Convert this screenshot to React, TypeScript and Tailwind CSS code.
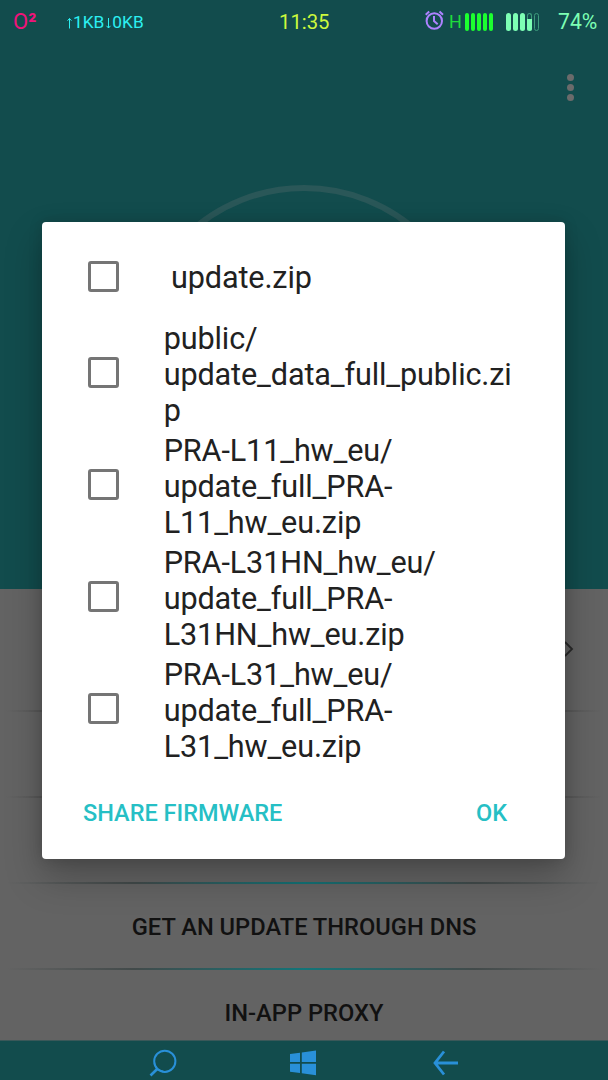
const files = [
  ["public/", "update_data_full_public.zi", "p"],
  ["PRA-L11_hw_eu/", "update_full_PRA-", "L11_hw_eu.zip"],
  ["PRA-L31HN_hw_eu/", "update_full_PRA-", "L31HN_hw_eu.zip"],
  ["PRA-L31_hw_eu/", "update_full_PRA-", "L31_hw_eu.zip"],
];

function AlarmIcon() {
  return (
    <svg width="20" height="20" viewBox="0 0 20 20" fill="none" stroke="#ad82ff" strokeWidth="2">
      <circle cx="9.3" cy="11" r="7.7" />
      <path d="M9 6v5l3.7 3.2" />
      <path d="M.7 4.7 4.2 1.5M18 4.7 14.5 1.5" />
    </svg>
  );
}

function StatusBar() {
  return (
    <div className="flex h-11 items-center">
      <div className="w-[66px] pl-[13px] text-[22px] leading-[44px] text-[#f0127a]">
        O<span className="font-bold">²</span>
      </div>
      <div className="flex w-[213px] items-center text-[17.3px] leading-[44px] text-[#2cf0f2]">
        <svg width="7" height="14" viewBox="0 0 7 14" fill="none" stroke="#2cf0f2" className="mt-[2px]">
          <path d="M3.5 12.5v-10M1.5 4.7l2-2.2 2 2.2" />
        </svg>
        <div>1KB</div>
        <svg width="8" height="14" viewBox="0 0 8 14" fill="none" stroke="#2cf0f2" className="mt-[2px]">
          <path d="M4.5 2v10M2.5 9.8l2 2.2 2-2.2" />
        </svg>
        <div>0KB</div>
      </div>
      <div className="w-[146px] text-[20.3px] leading-[42px] text-[#cdf93c]">11:35</div>
      <div className="w-6 pb-1">
        <AlarmIcon />
      </div>
      <div className="w-4 text-[18px] leading-[44px] text-[#1edc3c]">H</div>
      <div className="flex w-[41px] gap-[2px]">
        <div className="h-[18px] w-1 rounded-full bg-[#1cff2f]" />
        <div className="h-[18px] w-1 rounded-full bg-[#1cff2f]" />
        <div className="h-[18px] w-1 rounded-full bg-[#1cff2f]" />
        <div className="h-[18px] w-1 rounded-full bg-[#1cff2f]" />
        <div className="h-[18px] w-1 rounded-full bg-[#1cff2f]" />
      </div>
      <div className="flex w-[52px] gap-[2px]">
        <div className="h-[18px] w-[5px] rounded-full bg-[#7dffb4]" />
        <div className="h-[18px] w-[5px] rounded-full bg-[#7dffb4]" />
        <div className="h-[18px] w-[5px] rounded-full bg-[#7dffb4]" />
        <div className="flex h-[18px] w-[5px] flex-col justify-end rounded-full border border-b-0 border-[#3d9b7c]">
          <div className="-mx-px h-3 rounded-b-full bg-[#7dffb4]" />
        </div>
        <div className="h-[18px] w-[5px] rounded-full border border-[#3d9b7c]" />
      </div>
      <div className="text-[21.2px] leading-[44px] text-[#7dffb4]">74%</div>
    </div>
  );
}

function Header() {
  return (
    <div className="h-[589px] bg-[#124c4d]">
      <StatusBar />
      <div className="flex h-[88px] justify-end pr-[34px] pt-[30px]">
        <div className="flex flex-col gap-[3px]">
          <div className="size-[7px] rounded-full bg-[#6b6b6b]" />
          <div className="size-[7px] rounded-full bg-[#6b6b6b]" />
          <div className="size-[7px] rounded-full bg-[#6b6b6b]" />
        </div>
      </div>
      <div className="flex justify-center pt-[53px]">
        <div className="size-[346px] rounded-full border-[6px] border-[#2a5758]" />
      </div>
    </div>
  );
}

function Divider({ teal = false }: { teal?: boolean }) {
  return (
    <div
      className={
        teal
          ? "h-[2px] bg-[linear-gradient(to_right,#636363_1%,#424a4a_22%,#127478_50%,#424a4a_78%,#636363_99%)]"
          : "h-[2px] bg-[linear-gradient(to_right,#636363_1%,#484848_14%,#484848_86%,#636363_99%)]"
      }
    />
  );
}

function Menu() {
  return (
    <div className="h-[451px] bg-[#636363] text-[23.7px] font-medium text-[#111]">
      <div className="flex h-[121px] items-center justify-end pr-[34px]">
        <svg width="10" height="18" viewBox="0 0 10 18" fill="none" stroke="#292929" strokeWidth="1.8">
          <path d="m1 1 7 7-7 7" />
        </svg>
      </div>
      <Divider />
      <div className="h-[84px]" />
      <Divider />
      <div className="h-[84px]" />
      <Divider teal />
      <div className="flex h-[84px] items-center justify-center pt-[3px]">GET AN UPDATE THROUGH DNS</div>
      <Divider teal />
      <div className="flex h-[84px] items-center justify-center pt-[3px]">IN-APP PROXY</div>
    </div>
  );
}

function NavBar() {
  return (
    <div className="flex h-10 items-center border-t border-[#3a5859] bg-[#124c4d] pl-[149px] pt-[5px]">
      <div className="w-[141px]">
        <svg width="28" height="28" viewBox="0 0 28 28" fill="none" stroke="#2990d8" strokeWidth="2">
          <circle cx="15.8" cy="12.3" r="10.6" />
          <path d="M5.4 14.5 8 20.5l6 2" strokeWidth="1.4" />
          <path d="M8.7 19.5 1.5 26.5" strokeWidth="2.6" />
        </svg>
      </div>
      <div className="w-[141px]">
        <svg width="26" height="26" viewBox="0 0 26 26" fill="#2990d8">
          <path d="M0 4 10 2.7V12H0zM11.8 2.4 26 .4V12H11.8zM0 13.8h10v9.3L0 21.8zM11.8 13.8H26v11.4l-14.2-2z" />
        </svg>
      </div>
      <svg width="28" height="26" viewBox="0 0 28 26" fill="none" stroke="#2990d8" strokeWidth="2.8">
        <path d="M27 13H4M13 1.5 4 13l9 11.5" />
      </svg>
    </div>
  );
}

function Checkbox() {
  return <div className="size-[31px] shrink-0 rounded-[3px] border-3 border-[#757575]" />;
}

function FirmwareDialog() {
  return (
    <div className="absolute inset-x-0 top-[222px] flex justify-center pr-px">
      <div className="h-[637px] w-[523px] rounded-[4px] bg-white pt-[14px] text-[30.6px] leading-[35.7px] tracking-[-0.13px] text-[#212121] shadow-[0_18px_36px_rgba(0,0,0,0.25),0_0_14px_rgba(0,0,0,0.15)]">
        <div className="flex h-[80px] items-center pl-[45.5px]">
          <Checkbox />
          <div className="pl-[52.5px] pt-[4px]">update.zip</div>
        </div>
        {files.map((lines) => (
          <div key={lines[0]} className="flex h-[112px] items-center pl-[45.5px]">
            <Checkbox />
            <div className="whitespace-nowrap pl-[45.2px] pt-[6px]">
              {lines.map((line) => (
                <div key={line}>{line}</div>
              ))}
            </div>
          </div>
        ))}
        <div className="flex justify-between pl-[41px] pr-[58px] pt-[32px] text-[23.5px] font-medium tracking-normal text-[#26bfc5]">
          <button type="button">SHARE FIRMWARE</button>
          <button type="button">OK</button>
        </div>
      </div>
    </div>
  );
}

export default function App() {
  return (
    <div className="relative h-[1080px] w-[608px] overflow-hidden font-[Roboto,sans-serif]">
      <Header />
      <Menu />
      <NavBar />
      <FirmwareDialog />
    </div>
  );
}
